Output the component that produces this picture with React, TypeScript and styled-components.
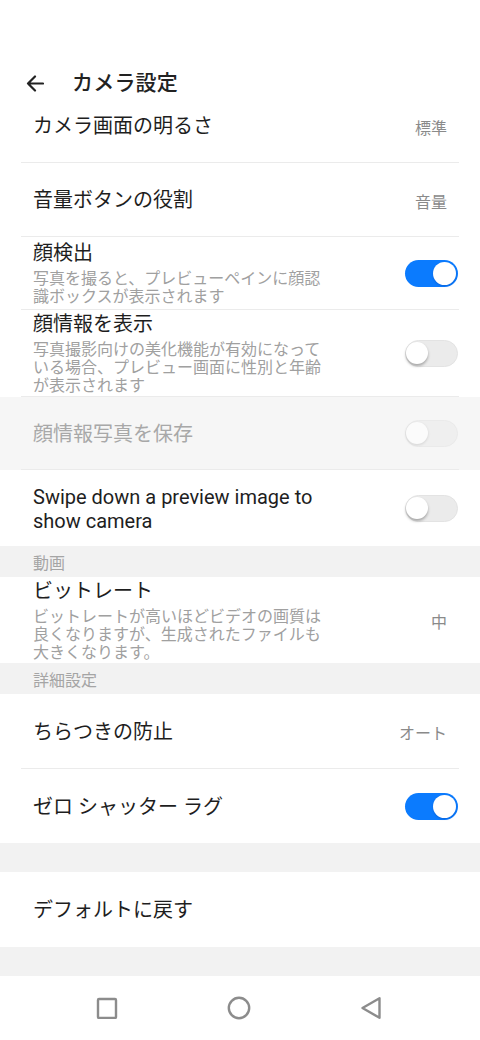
import React from "react";
import styled, { createGlobalStyle, css } from "styled-components";

const GlobalStyle = createGlobalStyle`
  html, body {
    margin: 0;
    padding: 0;
    background: #fff;
  }
  body {
    font-family: Roboto, "Noto Sans CJK JP", "Noto Sans", sans-serif;
    color: #222;
  }
`;

const Screen = styled.div`
  width: 480px;
  height: 1040px;
  display: flex;
  flex-direction: column;
  background: #fff;
  overflow: hidden;
`;

const Header = styled.div`
  height: 104px;
  flex-shrink: 0;
  display: flex;
  align-items: center;
  box-sizing: border-box;
  padding: 62px 0 0 26px;
  gap: 28px;
  position: relative;
  z-index: 1;
  background: #fff;
`;

const BackButton = styled.div`
  width: 18px;
  height: 18px;
  display: flex;
  svg {
    display: block;
  }
`;

const Title = styled.h1`
  margin: 0;
  font-size: 21px;
  font-weight: 500;
  color: #222;
  line-height: 42px;
  letter-spacing: 0.2px;
`;

const Viewport = styled.div`
  flex: 1;
  overflow: hidden;
`;

const ScrollContent = styled.div`
  margin-top: -15px;
`;

const Row = styled.div<{ $h: number; $disabled?: boolean }>`
  height: ${(p) => p.$h}px;
  background: ${(p) => (p.$disabled ? "#f6f6f6" : "#fff")};
  display: flex;
`;

const RowInner = styled.div<{ $divider?: boolean }>`
  flex: 1;
  margin: 0 21px;
  padding: 0 1px 0 12px;
  display: flex;
  align-items: center;
  justify-content: space-between;
  gap: 16px;
  ${(p) =>
    p.$divider &&
    css`
      border-bottom: 1px solid #ebebeb;
    `}
`;

const TextBlock = styled.div`
  display: flex;
  flex-direction: column;
  max-width: 290px;
`;

const ItemTitle = styled.div<{ $disabled?: boolean }>`
  font-size: 20px;
  line-height: 24px;
  color: ${(p) => (p.$disabled ? "#a8a8a8" : "#1e1e1e")};
  padding-top: 1px;
`;

const ItemSub = styled.div<{ $gap?: number }>`
  font-size: 16px;
  line-height: 18.3px;
  color: #a0a0a0;
  margin-top: ${(p) => p.$gap ?? 5}px;
`;

const Value = styled.div`
  font-size: 16px;
  color: #8a8a8a;
  margin-right: 11px;
  flex-shrink: 0;
  padding-top: 2px;
`;

const SectionHeader = styled.div<{ $h?: number }>`
  height: ${(p) => p.$h ?? 31}px;
  background: #f2f2f2;
  display: flex;
  align-items: center;
  padding-left: 33px;
  font-size: 16px;
  color: #a5a5a5;
`;

const Track = styled.div<{ $on?: boolean; $disabled?: boolean }>`
  width: 53px;
  height: 27px;
  box-sizing: border-box;
  border-radius: 14px;
  flex-shrink: 0;
  display: flex;
  align-items: center;
  padding: 0 2px;
  justify-content: ${(p) => (p.$on ? "flex-end" : "flex-start")};
  background: ${(p) => (p.$on ? "#0b7bfe" : p.$disabled ? "#efefef" : "#ebebeb")};
  border: ${(p) => (p.$on ? "none" : `1px solid ${p.$disabled ? "#eaeaea" : "#e3e3e3"}`)};
  ${(p) =>
    !p.$on &&
    css`
      padding: 0;
    `}
`;

const Knob = styled.div<{ $on?: boolean; $disabled?: boolean }>`
  width: ${(p) => (p.$on ? 23 : 22)}px;
  height: ${(p) => (p.$on ? 23 : 22)}px;
  border-radius: 50%;
  background: ${(p) => (p.$disabled ? "#fbfbfb" : "#fff")};
  box-shadow: ${(p) =>
    p.$on
      ? "0 1px 2px rgba(0, 60, 160, 0.35)"
      : p.$disabled
      ? "0 1px 3px rgba(0, 0, 0, 0.12)"
      : "0 2px 3px rgba(0, 0, 0, 0.3)"};
`;

const NavBar = styled.div`
  height: 64px;
  flex-shrink: 0;
  background: #fff;
  display: flex;
  align-items: center;
  padding-left: 96px;
  gap: 109px;
  box-sizing: border-box;
  svg {
    display: block;
  }
`;

const Toggle = ({ on, disabled }: { on?: boolean; disabled?: boolean }) => (
  <Track $on={on} $disabled={disabled}>
    <Knob $on={on} $disabled={disabled} />
  </Track>
);

const App = () => {
  return (
    <Screen>
      <GlobalStyle />
      <Header>
        <BackButton>
          <svg width="18" height="18" viewBox="0 0 18 18" fill="none">
            <path
              d="M17 9.5H2M9 2.5L2 9.5l7 7"
              stroke="#222"
              strokeWidth="2.2"
              strokeLinecap="round"
              strokeLinejoin="round"
            />
          </svg>
        </BackButton>
        <Title>カメラ設定</Title>
      </Header>

      <Viewport>
        <ScrollContent>
          <Row $h={74}>
            <RowInner $divider>
              <ItemTitle>カメラ画面の明るさ</ItemTitle>
              <Value>標準</Value>
            </RowInner>
          </Row>
          <Row $h={74}>
            <RowInner $divider>
              <ItemTitle>音量ボタンの役割</ItemTitle>
              <Value>音量</Value>
            </RowInner>
          </Row>
          <Row $h={73}>
            <RowInner $divider>
              <TextBlock>
                <ItemTitle>顔検出</ItemTitle>
                <ItemSub>
                  写真を撮ると、プレビューペインに顔認識ボックスが表示されます
                </ItemSub>
              </TextBlock>
              <Toggle on />
            </RowInner>
          </Row>
          <Row $h={87}>
            <RowInner $divider>
              <TextBlock>
                <ItemTitle>顔情報を表示</ItemTitle>
                <ItemSub>
                  写真撮影向けの美化機能が有効になっている場合、プレビュー画面に性別と年齢が表示されます
                </ItemSub>
              </TextBlock>
              <Toggle />
            </RowInner>
          </Row>
          <Row $h={73} $disabled>
            <RowInner $divider>
              <ItemTitle $disabled>顔情報写真を保存</ItemTitle>
              <Toggle disabled />
            </RowInner>
          </Row>
          <Row $h={76}>
            <RowInner>
              <TextBlock>
                <ItemTitle>Swipe down a preview image to show camera</ItemTitle>
              </TextBlock>
              <Toggle />
            </RowInner>
          </Row>

          <SectionHeader>動画</SectionHeader>
          <Row $h={86}>
            <RowInner>
              <TextBlock>
                <ItemTitle>ビットレート</ItemTitle>
                <ItemSub $gap={5}>
                  ビットレートが高いほどビデオの画質は良くなりますが、生成されたファイルも大きくなります。
                </ItemSub>
              </TextBlock>
              <Value>中</Value>
            </RowInner>
          </Row>

          <SectionHeader>詳細設定</SectionHeader>
          <Row $h={75}>
            <RowInner $divider>
              <ItemTitle>ちらつきの防止</ItemTitle>
              <Value>オート</Value>
            </RowInner>
          </Row>
          <Row $h={74}>
            <RowInner>
              <ItemTitle>ゼロ シャッター ラグ</ItemTitle>
              <Toggle on />
            </RowInner>
          </Row>

          <SectionHeader $h={29} />
          <Row $h={75}>
            <RowInner>
              <ItemTitle>デフォルトに戻す</ItemTitle>
            </RowInner>
          </Row>
          <SectionHeader $h={40} />
        </ScrollContent>
      </Viewport>

      <NavBar>
        <svg width="22" height="22" viewBox="0 0 22 22" fill="none">
          <rect x="2" y="2" width="18" height="19" rx="1" stroke="#8c8c8c" strokeWidth="2.4" />
        </svg>
        <svg width="24" height="24" viewBox="0 0 24 24" fill="none">
          <circle cx="12" cy="12" r="10.2" stroke="#8c8c8c" strokeWidth="2.4" />
        </svg>
        <svg width="22" height="24" viewBox="0 0 22 24" fill="none">
          <path
            d="M19.5 2.2v19.6L2.5 12z"
            stroke="#8c8c8c"
            strokeWidth="2.4"
            strokeLinejoin="round"
          />
        </svg>
      </NavBar>
    </Screen>
  );
};

export default App;
